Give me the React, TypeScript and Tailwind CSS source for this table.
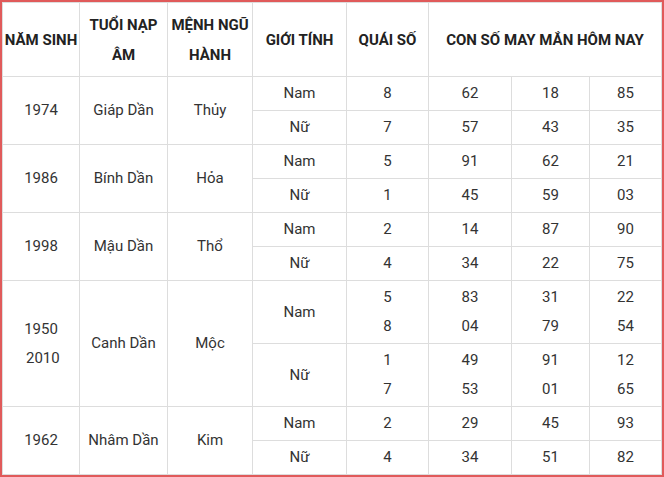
import React from 'react';

type Sub = { gender: string; quai: string[]; nums: string[][] };
type Row = { years: string[]; tuoi: string; menh: string; subs: Sub[] };

const rows: Row[] = [
  {
    years: ['1974'],
    tuoi: 'Giáp Dần',
    menh: 'Thủy',
    subs: [
      { gender: 'Nam', quai: ['8'], nums: [['62', '18', '85']] },
      { gender: 'Nữ', quai: ['7'], nums: [['57', '43', '35']] },
    ],
  },
  {
    years: ['1986'],
    tuoi: 'Bính Dần',
    menh: 'Hỏa',
    subs: [
      { gender: 'Nam', quai: ['5'], nums: [['91', '62', '21']] },
      { gender: 'Nữ', quai: ['1'], nums: [['45', '59', '03']] },
    ],
  },
  {
    years: ['1998'],
    tuoi: 'Mậu Dần',
    menh: 'Thổ',
    subs: [
      { gender: 'Nam', quai: ['2'], nums: [['14', '87', '90']] },
      { gender: 'Nữ', quai: ['4'], nums: [['34', '22', '75']] },
    ],
  },
  {
    years: ['1950', '\u00a02010'],
    tuoi: 'Canh Dần',
    menh: 'Mộc',
    subs: [
      { gender: 'Nam', quai: ['5', '8'], nums: [['83', '31', '22'], ['04', '79', '54']] },
      { gender: 'Nữ', quai: ['1', '7'], nums: [['49', '91', '12'], ['53', '01', '65']] },
    ],
  },
  {
    years: ['1962'],
    tuoi: 'Nhâm Dần',
    menh: 'Kim',
    subs: [
      { gender: 'Nam', quai: ['2'], nums: [['29', '45', '93']] },
      { gender: 'Nữ', quai: ['4'], nums: [['34', '51', '82']] },
    ],
  },
];

const th = 'border border-[#dddddd] text-center align-middle font-bold text-[15px] leading-[30px] text-[#222222] p-0 whitespace-nowrap';
const td = 'border border-[#dddddd] text-center align-middle text-[15px] leading-[29px] text-[#333333] p-0 whitespace-nowrap';

const Lines: React.FC<{ items: string[] }> = ({ items }) => (
  <>
    {items.map((t, i) => (
      <div key={i}>{t}</div>
    ))}
  </>
);

export default function App() {
  return (
    <div className="w-[664px] h-[477px] border-2 border-[#e05a5a] bg-white overflow-hidden" style={{ fontFamily: 'Roboto, "Noto Sans", sans-serif' }}>
      <table className="w-full border-collapse table-fixed">
        <colgroup>
          <col className="w-[77px]" />
          <col className="w-[88px]" />
          <col className="w-[85px]" />
          <col className="w-[94px]" />
          <col className="w-[82px]" />
          <col className="w-[83px]" />
          <col className="w-[78px]" />
          <col />
        </colgroup>
        <thead>
          <tr className="h-[74px]">
            <th className={th}>NĂM SINH</th>
            <th className={th}>TUỔI NẠP<br />ÂM</th>
            <th className={th}>MỆNH NGŨ<br />HÀNH</th>
            <th className={th}>GIỚI TÍNH</th>
            <th className={th}>QUÁI SỐ</th>
            <th className={th} colSpan={3}>CON SỐ MAY MẮN HÔM NAY</th>
          </tr>
        </thead>
        <tbody>
          {rows.map((r) =>
            r.subs.map((s, si) => (
              <tr key={r.tuoi + si} className={s.quai.length > 1 ? 'h-[63px]' : 'h-[34px]'}>
                {si === 0 && (
                  <>
                    <td className={td} rowSpan={r.subs.length}>
                      <Lines items={r.years} />
                    </td>
                    <td className={td} rowSpan={r.subs.length}>{r.tuoi}</td>
                    <td className={td} rowSpan={r.subs.length}>{r.menh}</td>
                  </>
                )}
                <td className={td}>{s.gender}</td>
                <td className={td}>
                  <Lines items={s.quai} />
                </td>
                {[0, 1, 2].map((c) => (
                  <td key={c} className={td}>
                    <Lines items={s.nums.map((n) => n[c])} />
                  </td>
                ))}
              </tr>
            ))
          )}
        </tbody>
      </table>
    </div>
  );
}
